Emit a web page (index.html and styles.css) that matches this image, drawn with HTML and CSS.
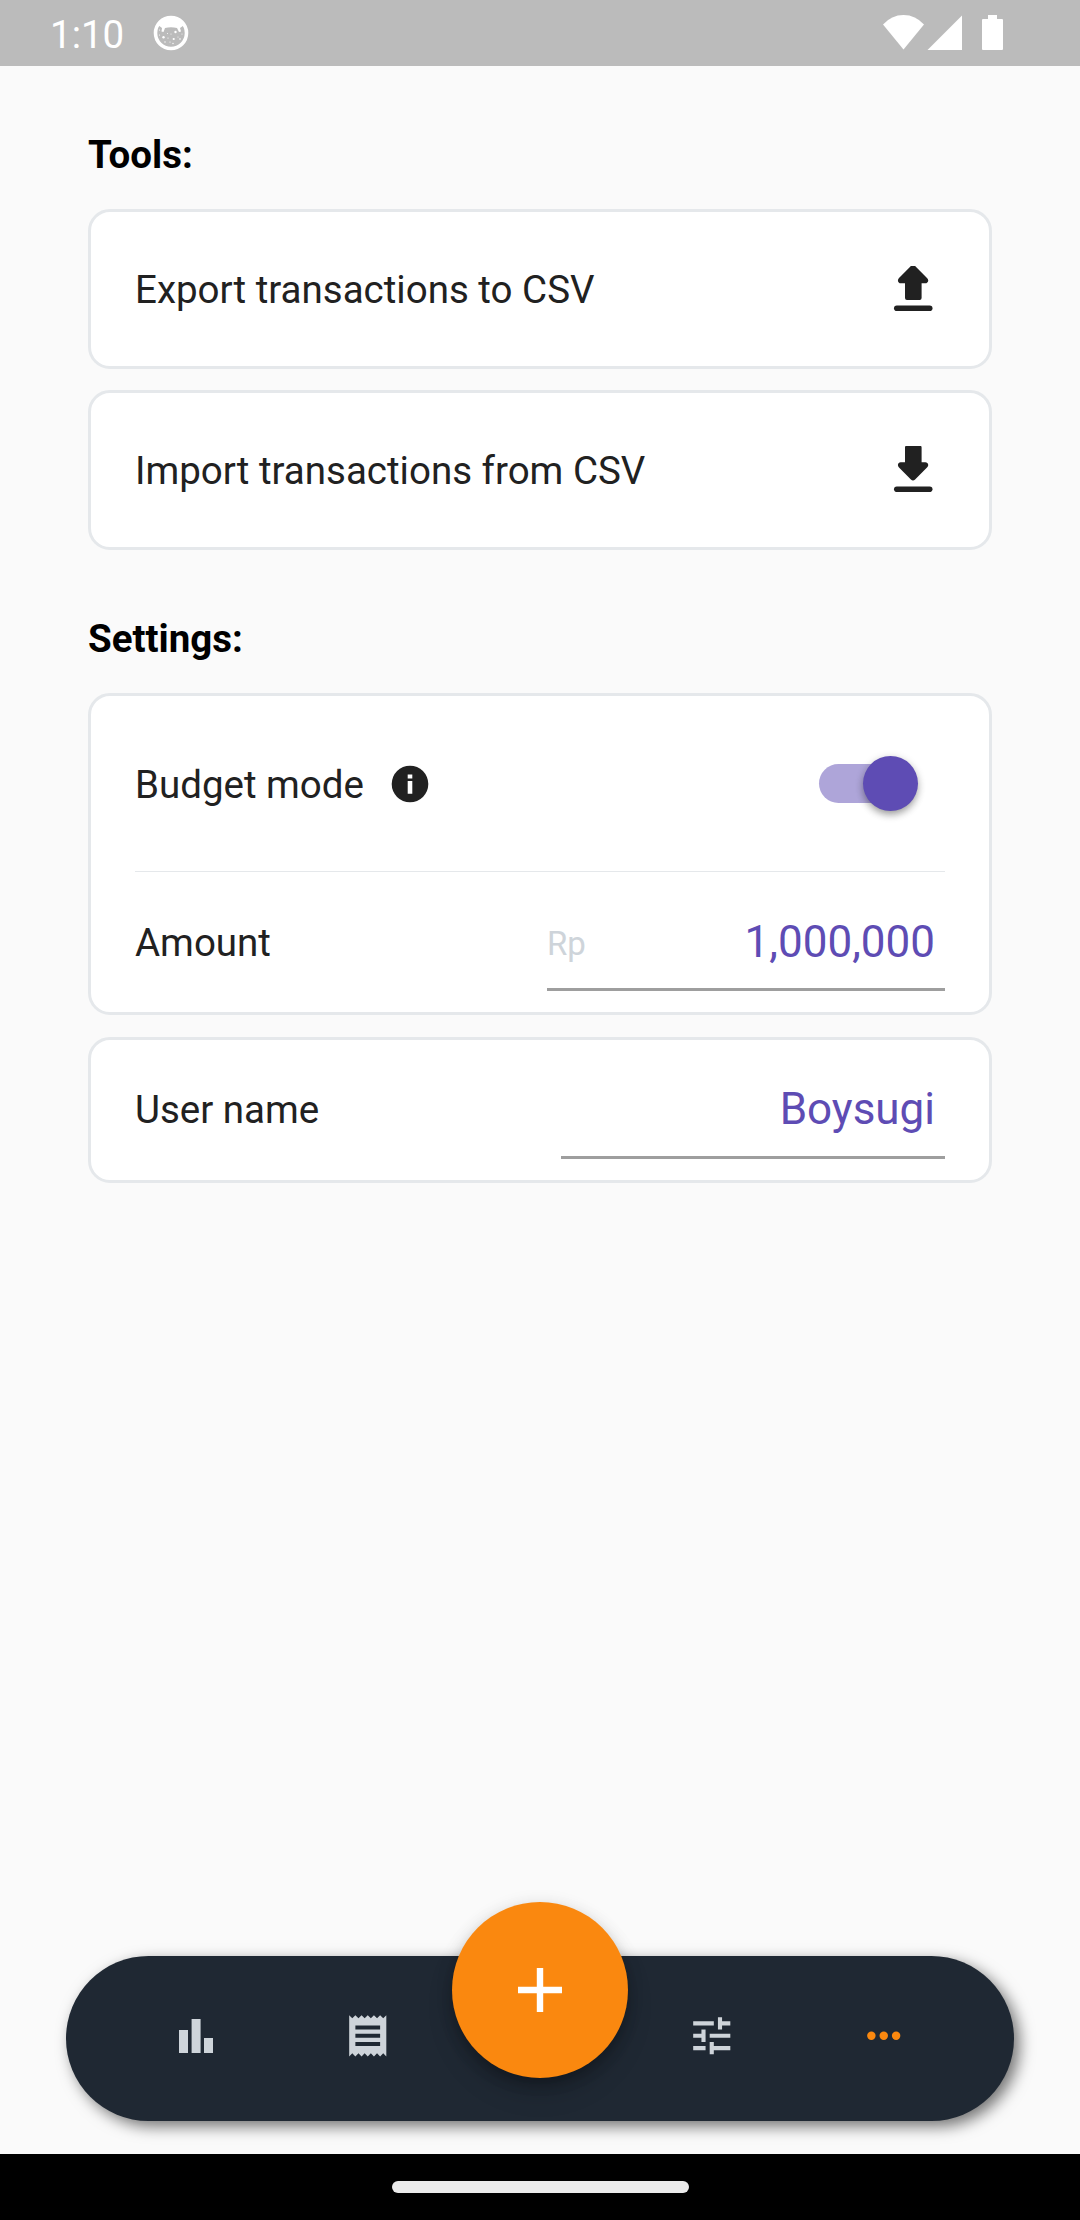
FILE: index.html
```html
<!DOCTYPE html>
<html lang="en">
<head>
<meta charset="utf-8">
<title>Settings</title>
<link rel="stylesheet" href="styles.css">
</head>
<body>
<div class="screen">
  <header class="status-bar">
    <span class="clock">1:10</span>
    <svg class="app-icon" viewBox="0 0 36 36" width="36" height="36">
      <circle cx="18" cy="18" r="15.5" fill="none" stroke="#fff" stroke-width="3.6"/>
      <path d="M5 10Q9 2 18 2t13 8L28.500 12l-1.500 1 1 3.500-2 .5-2-4q-6-1.500-12 0L10.500 17 8.500 16.500l.5-3.500z" fill="#fff"/>
      <g fill="#fff">
        <circle cx="10.500" cy="22.300" r="1.200"/><circle cx="22.500" cy="17" r="1.200"/><circle cx="20.700" cy="24" r="1.100"/>
        <circle cx="6.500" cy="20" r=".6"/><circle cx="14.500" cy="18.500" r=".5"/><circle cx="15" cy="23" r=".6"/><circle cx="17" cy="27" r=".6"/>
        <circle cx="20" cy="28.500" r=".7"/><circle cx="25" cy="22" r=".5"/><circle cx="27" cy="24" r=".8"/><circle cx="12" cy="27" r=".7"/><circle cx="29" cy="19" r=".5"/><circle cx="6.500" cy="15" r=".6"/><circle cx="18" cy="19" r=".5"/>
      </g>
    </svg>
    <svg class="system-icons" viewBox="0 0 122 36" width="122" height="36">
      <path d="M0 9.500Q8.500 0 20.500 0T41 9.500L20.500 34.500z" fill="#fff"/>
      <path d="M44.500 35L79 .5V35z" fill="#fff"/>
      <path d="M105 4V0h9v4h5q1 0 1 1v29q0 1-1 1h-19q-1 0-1-1V5q0-1 1-1z" fill="#fff"/>
    </svg>
  </header>

  <main class="content">
    <h2 class="section-title">Tools:</h2>
    <section class="card action">
      <span class="label">Export transactions to CSV</span>
      <svg viewBox="0 0 40 46" width="40" height="46" fill="#212121">
        <path d="M17.900 0q2.100-1.800 4.200 0L34 12q2.500 2.500 0 4.700-.6.600-1.600.6H28.600V32q0 2-2 2H14q-2 0-2-2V17.300H7.600q-1 0-1.600-.6-2.200-2.200 0-4.700z"/>
        <rect x="1" y="39.500" width="38.500" height="5.600" rx="2.800"/>
      </svg>
    </section>
    <section class="card action">
      <span class="label">Import transactions from CSV</span>
      <svg class="import-icon" viewBox="0 0 40 46" width="40" height="46" fill="#212121">
        <path d="M17.900 33.500q2.100 1.800 4.200 0L34 21.500q2.500-2.500 0-4.700-.6-.6-1.600-.6H28.600V1.500q0-2-2-2H14q-2 0-2 2V16.200H7.600q-1 0-1.600.6-2.200 2.200 0 4.700z"/>
        <rect x="1" y="40.500" width="38.500" height="5.600" rx="2.800"/>
      </svg>
    </section>

    <h2 class="section-title settings-title">Settings:</h2>
    <section class="card budget">
      <div class="mode-row">
        <span class="label">Budget mode</span>
        <svg class="info" viewBox="0 0 38 38" width="38" height="38">
          <circle cx="19" cy="19" r="18.300" fill="#212121"/>
          <path d="M16.700 9.500h4.600v3.900h-4.600zM16.700 16h4.600v12.700h-4.600z" fill="#fff"/>
        </svg>
        <span class="switch"><span class="thumb"></span></span>
      </div>
      <div class="amount-row">
        <span class="label">Amount</span>
        <div class="field amount-field"><span class="prefix">Rp</span><span class="value">1,000,000</span></div>
      </div>
    </section>
    <section class="card user">
      <span class="label">User name</span>
      <div class="field name-field"><span class="value">Boysugi</span></div>
    </section>
  </main>

  <nav class="nav-bar">
    <a class="item"><svg viewBox="0 0 34 34" width="34" height="34"><path d="M0 11h9v23H0zM12.600 0h9v34h-9zM25 19h9v15h-9z"/></svg></a>
    <a class="item"><svg viewBox="0 0 24 24" width="49.500" height="49.500"><path d="M18 17H6v-2h12v2zm0-4H6v-2h12v2zm0-4H6V7h12v2zM3 22l1.500-1.500L6 22l1.500-1.500L9 22l1.500-1.500L12 22l1.500-1.500L15 22l1.500-1.500L18 22l1.500-1.500L21 22V2l-1.500 1.500L18 2l-1.500 1.500L15 2l-1.500 1.500L12 2l-1.500 1.500L9 2 7.500 3.500 6 2 4.500 3.500 3 2v20z"/></svg></a>
    <a class="item"><span class="fab"><svg viewBox="0 0 44 44" width="44" height="44"><path d="M18.800 0h6.400v18.800H44v6.400H25.200V44h-6.400V25.200H0v-6.400h18.800z"/></svg></span></a>
    <a class="item"><svg viewBox="0 0 24 24" width="49.500" height="49.500"><path d="M3 17v2h6v-2H3zM3 5v2h10V5H3zm10 16v-2h8v-2h-8v-2h-2v6h2zM7 9v2H3v2h4v2h2V9H7zm14 4v-2H11v2h10zm-6-4h2V7h4V5h-4V3h-2v6z"/></svg></a>
    <a class="item active"><svg viewBox="0 0 24 24" width="49.500" height="49.500"><circle cx="6" cy="12" r="2.050"/><circle cx="12" cy="12" r="2.050"/><circle cx="18" cy="12" r="2.050"/></svg></a>
  </nav>

  <footer class="gesture-bar"><span class="handle"></span></footer>
</div>
</body>
</html>
```

FILE: styles.css
```css
* { box-sizing: border-box; }

body {
  margin: 0;
  font-family: Roboto, "Liberation Sans", sans-serif;
  background: #fafafa;
}

svg { display: block; flex: none; }

.screen {
  display: flex;
  flex-direction: column;
  width: 1080px;
  height: 2220px;
  background: #fafafa;
}

.status-bar {
  display: flex;
  align-items: center;
  height: 66px;
  flex: none;
  padding: 0 75px 0 50px;
  background: #bbb;
  color: #fff;
}

.clock {
  width: 103px;
  font-size: 38.5px;
  line-height: 46px;
  padding-top: 3px;
}

.system-icons { margin-left: auto; }

.content {
  display: flex;
  flex-direction: column;
  flex: 1;
  padding: 66px 88px 0;
}

.section-title {
  margin: 0 0 32px;
  font-size: 38.5px;
  line-height: 45px;
  font-weight: 700;
  color: #000;
}

.settings-title { margin: 66px 0 32px; }

.label {
  font-size: 38.5px;
  line-height: 45px;
  color: #212121;
}

.card {
  display: flex;
  justify-content: space-between;
  background: #fff;
  border: 3px solid #e5e8eb;
  border-radius: 22px;
  padding: 0 44px;
}

.action {
  align-items: center;
  height: 160px;
  padding-right: 56px;
}

.action + .action { margin-top: 21px; }

.import-icon { margin-bottom: 2px; }

.budget {
  flex-direction: column;
  justify-content: flex-start;
  height: 322px;
}

.mode-row {
  display: flex;
  align-items: center;
  height: 176px;
  border-bottom: 1px solid #e5e8eb;
}

.mode-row .label { padding-top: 2px; }

.info { margin-left: 27px; }

.switch {
  display: flex;
  align-items: center;
  justify-content: flex-end;
  width: 91px;
  height: 39px;
  margin: 0 35px 0 auto;
  border-radius: 20px;
  background: #aea5d9;
}

.thumb {
  flex: none;
  width: 55px;
  height: 55px;
  margin-right: -8px;
  border-radius: 50%;
  background: #5e4cb4;
  box-shadow: 0 5px 8px -2px rgba(0, 0, 0, .3), 0 2px 8px rgba(0, 0, 0, .2);
}

.amount-row {
  display: flex;
  justify-content: space-between;
  padding-top: 44px;
}

.amount-row .label { padding-top: 4px; }

.field {
  display: flex;
  align-items: flex-start;
  justify-content: space-between;
  padding: 0 10px 0 0;
  border-bottom: 3px solid #9e9e9e;
}

.amount-field { width: 398px; height: 75px; }

.name-field {
  width: 384px;
  height: 76px;
  justify-content: flex-end;
}

.prefix {
  padding-top: 2px;
  font-size: 33px;
  line-height: 52px;
  color: #ced4da;
}

.value {
  font-size: 44px;
  line-height: 52px;
  color: #5e4cb4;
}

.user {
  height: 146px;
  margin-top: 22px;
  padding-top: 43px;
}

.user .label { padding-top: 4px; }

.nav-bar {
  display: flex;
  justify-content: center;
  width: 948px;
  height: 165px;
  flex: none;
  margin: 0 auto 33px;
  border-radius: 82.5px;
  background: #1f2833;
  box-shadow: 5.5px 5.5px 15px rgba(0, 0, 0, .54);
}

.item {
  display: flex;
  align-items: center;
  justify-content: center;
  width: 172px;
  height: 160px;
  fill: #ced4da;
}

.item.active { fill: #fa880f; }

.fab {
  display: flex;
  align-items: center;
  justify-content: center;
  flex: none;
  width: 176px;
  height: 176px;
  margin-bottom: 92px;
  border-radius: 50%;
  background: #fa880f;
  fill: #fff;
  box-shadow: 0 8px 14px -3px rgba(0, 0, 0, .2), 0 16px 27px rgba(0, 0, 0, .14), 0 3px 18px rgba(0, 0, 0, .12);
}

.gesture-bar {
  display: flex;
  align-items: center;
  justify-content: center;
  height: 66px;
  flex: none;
  background: #000;
}

.handle {
  width: 297px;
  height: 12px;
  border-radius: 6px;
  background: #ebebeb;
}
```
